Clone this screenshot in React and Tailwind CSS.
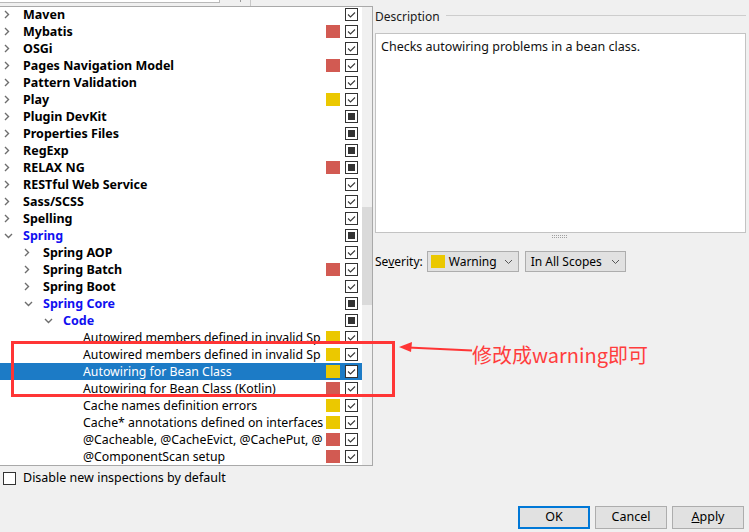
import React from 'react';

const rows = [
  { level: 0, label: 'Maven', box: 'on' },
  { level: 0, label: 'Mybatis', sev: 'error', box: 'on' },
  { level: 0, label: 'OSGi', box: 'on' },
  { level: 0, label: 'Pages Navigation Model', sev: 'error', box: 'on' },
  { level: 0, label: 'Pattern Validation', box: 'on' },
  { level: 0, label: 'Play', sev: 'warn', box: 'on' },
  { level: 0, label: 'Plugin DevKit', box: 'mixed' },
  { level: 0, label: 'Properties Files', box: 'mixed' },
  { level: 0, label: 'RegExp', box: 'mixed' },
  { level: 0, label: 'RELAX NG', sev: 'error', box: 'mixed' },
  { level: 0, label: 'RESTful Web Service', box: 'on' },
  { level: 0, label: 'Sass/SCSS', box: 'on' },
  { level: 0, label: 'Spelling', box: 'on' },
  { level: 0, label: 'Spring', open: true, box: 'mixed' },
  { level: 1, label: 'Spring AOP', box: 'on' },
  { level: 1, label: 'Spring Batch', sev: 'error', box: 'on' },
  { level: 1, label: 'Spring Boot', box: 'on' },
  { level: 1, label: 'Spring Core', open: true, box: 'mixed' },
  { level: 2, label: 'Code', open: true, box: 'mixed' },
  { level: 3, label: 'Autowired members defined in invalid Sp', leaf: true, sev: 'warn', box: 'on' },
  { level: 3, label: 'Autowired members defined in invalid Sp', leaf: true, sev: 'warn', box: 'on' },
  { level: 3, label: 'Autowiring for Bean Class', leaf: true, sev: 'warn', box: 'on', selected: true },
  { level: 3, label: 'Autowiring for Bean Class (Kotlin)', leaf: true, sev: 'error', box: 'on' },
  { level: 3, label: 'Cache names definition errors', leaf: true, sev: 'warn', box: 'on' },
  { level: 3, label: 'Cache* annotations defined on interfaces', leaf: true, sev: 'warn', box: 'on' },
  { level: 3, label: '@Cacheable, @CacheEvict, @CachePut, @', leaf: true, sev: 'error', box: 'on' },
  { level: 3, label: '@ComponentScan setup', leaf: true, sev: 'error', box: 'on' },
];

const indent = ['pl-[4px]', 'pl-[24px]', 'pl-[44px]', 'pl-[64px]'];

const Chevron = ({ open }) =>
  open ? (
    <svg width="9" height="6" viewBox="0 0 9 6">
      <path d="M1 1 L4.5 4.5 L8 1" fill="none" stroke="#6e6e6e" strokeWidth="1.4" />
    </svg>
  ) : (
    <svg width="6" height="9" viewBox="0 0 6 9">
      <path d="M1 1 L4.5 4.5 L1 8" fill="none" stroke="#6e6e6e" strokeWidth="1.4" />
    </svg>
  );

const Box = ({ state }) => (
  <span className="flex h-[13px] w-[13px] shrink-0 items-center justify-center border border-[#333] bg-white">
    {state === 'on' ? (
      <svg width="11" height="11" viewBox="0 0 11 11">
        <path d="M2 5.5 L4.5 8 L9 3.5" fill="none" stroke="#3a3a3a" strokeWidth="1.1" />
      </svg>
    ) : state === 'mixed' ? (
      <span className="h-[7px] w-[7px] bg-[#333]" />
    ) : null}
  </span>
);

const TreeRow = ({ row }) => {
  const textColor = row.selected ? 'text-white' : row.open ? 'text-[#1010f0]' : 'text-black';
  return (
    <div className={`flex h-[17px] items-center ${row.selected ? 'bg-[#1c7bc6]' : ''}`}>
      <div className={`flex w-[325px] shrink-0 items-center overflow-hidden ${indent[row.level]}`}>
        <span className="flex w-[19px] shrink-0 items-center">{!row.leaf && <Chevron open={row.open} />}</span>
        <span
          className={`whitespace-nowrap leading-[17px] ${
            row.leaf ? 'text-[12.3px] font-normal' : 'text-[12.5px] font-bold'
          } ${textColor}`}
        >
          {row.label}
        </span>
      </div>
      <span className="ml-[1px] flex h-[13px] w-[14px] shrink-0">
        {row.sev === 'error' && <span className="h-full w-full bg-[#d25a52]" />}
        {row.sev === 'warn' && <span className="h-full w-full bg-[#ebc800]" />}
      </span>
      <span className="ml-[5px]">
        <Box state={row.box} />
      </span>
    </div>
  );
};

const Dropdown = ({ children, width }) => (
  <div className={`flex h-[21px] items-center border border-[#adadad] bg-[#e1e1e1] ${width}`}>
    {children}
    <svg className="ml-auto mr-[5px]" width="9" height="6" viewBox="0 0 9 6">
      <path d="M1 1 L4.5 4.5 L8 1" fill="none" stroke="#555" strokeWidth="1" />
    </svg>
  </div>
);

const Button = ({ children, primary }) => (
  <button
    type="button"
    className={`flex h-[23px] w-[72px] items-center justify-center bg-[#e1e1e1] text-[12.5px] text-black ${
      primary ? 'border-2 border-[#0078d7]' : 'border border-[#adadad]'
    }`}
  >
    {children}
  </button>
);

export default function App() {
  return (
    <div
      className="relative flex h-[532px] w-[749px] flex-col overflow-hidden bg-[#f0f0f0] text-[12px] text-black"
      style={{ fontFamily: '"Noto Sans", "Noto Sans CJK SC", sans-serif' }}
    >
      {/* search field strip */}
      <div className="flex h-[6px] shrink-0">
        <div className="h-[3px] w-[220px] border-b border-r border-[#b9b9b9] bg-white" />
        <div className="ml-[20px] h-[2px] w-px bg-[#999]" />
        <div className="ml-[9px] h-[6px] w-px bg-[#c8c8c8]" />
      </div>

      <div className="flex shrink-0">
        {/* inspections tree */}
        <div className="flex h-[460px] w-[373px] shrink-0 overflow-hidden border-y border-r border-[#a9a9a9] bg-white">
          <div className="-mt-px w-[362px] shrink-0">
            {rows.map((row, i) => (
              <TreeRow key={i} row={row} />
            ))}
          </div>
          <div className="flex w-[10px] shrink-0 flex-col bg-[#f0f0f0]">
            <div className="mt-[200px] h-[98px] bg-[#dadada]" />
          </div>
        </div>

        {/* description + severity */}
        <div className="ml-[2px] flex w-[371px] flex-col">
          <div className="mt-[3px] flex h-[16px] items-center">
            <span className="leading-[16px] text-[#1a1a1a]">Description</span>
            <div className="mb-[3px] ml-[6px] h-px flex-1 bg-[#cdcdcd]" />
          </div>
          <div className="mt-[8px] h-[200px] border border-[#c3c3c3] bg-white px-[5px] pt-[5px]">
            <p className="text-[12.5px] leading-[16px] text-[#111]">Checks autowiring problems in a bean class.</p>
          </div>
          <div className="mt-[2px] flex justify-center">
            <div className="ml-[-3px] h-[3px] w-[15px] border-y border-dotted border-[#a0a0a0]" />
          </div>
          <div className="mt-[13px] flex items-center">
            <span className="leading-[16px]">
              Se<span className="underline">v</span>erity:
            </span>
            <div className="ml-[4px]">
              <Dropdown width="w-[92px]">
                <span className="ml-[3px] h-[13px] w-[14px] bg-[#ebc800]" />
                <span className="ml-[4px]">Warning</span>
              </Dropdown>
            </div>
            <div className="ml-[6px]">
              <Dropdown width="w-[101px]">
                <span className="ml-[5px]">In All Scopes</span>
              </Dropdown>
            </div>
          </div>
        </div>
      </div>

      <label className="mt-[5px] flex items-center pl-[3px]">
        <span className="h-[13px] w-[13px] border border-[#333] bg-white" />
        <span className="ml-[7px] text-[12.5px] leading-[14px]">Disable new inspections by default</span>
      </label>

      <div className="mt-auto mb-[3px] flex justify-end gap-[5px] pr-[5px]">
        <Button primary>OK</Button>
        <Button>Cancel</Button>
        <Button>
          <span>
            <span className="underline">A</span>pply
          </span>
        </Button>
      </div>

      {/* red annotation overlay */}
      <div className="pointer-events-none absolute left-[11px] top-[341px] h-[56px] w-[384px] border-[3px] border-[#ff3535]" />
      <svg className="pointer-events-none absolute left-0 top-0" width="749" height="532">
        <polygon points="399,347 412,342 411,352" fill="#ff3535" />
        <line x1="408" y1="347.5" x2="472" y2="350.5" stroke="#ff3535" strokeWidth="2.2" />
      </svg>
      <span
        className="pointer-events-none absolute left-[472px] top-[342px] whitespace-nowrap text-[20px] leading-[26px] text-[#ff3d3d]"
        style={{ fontFamily: '"Noto Sans CJK SC", "Noto Sans", sans-serif' }}
      >
        修改成warning即可
      </span>
    </div>
  );
}
